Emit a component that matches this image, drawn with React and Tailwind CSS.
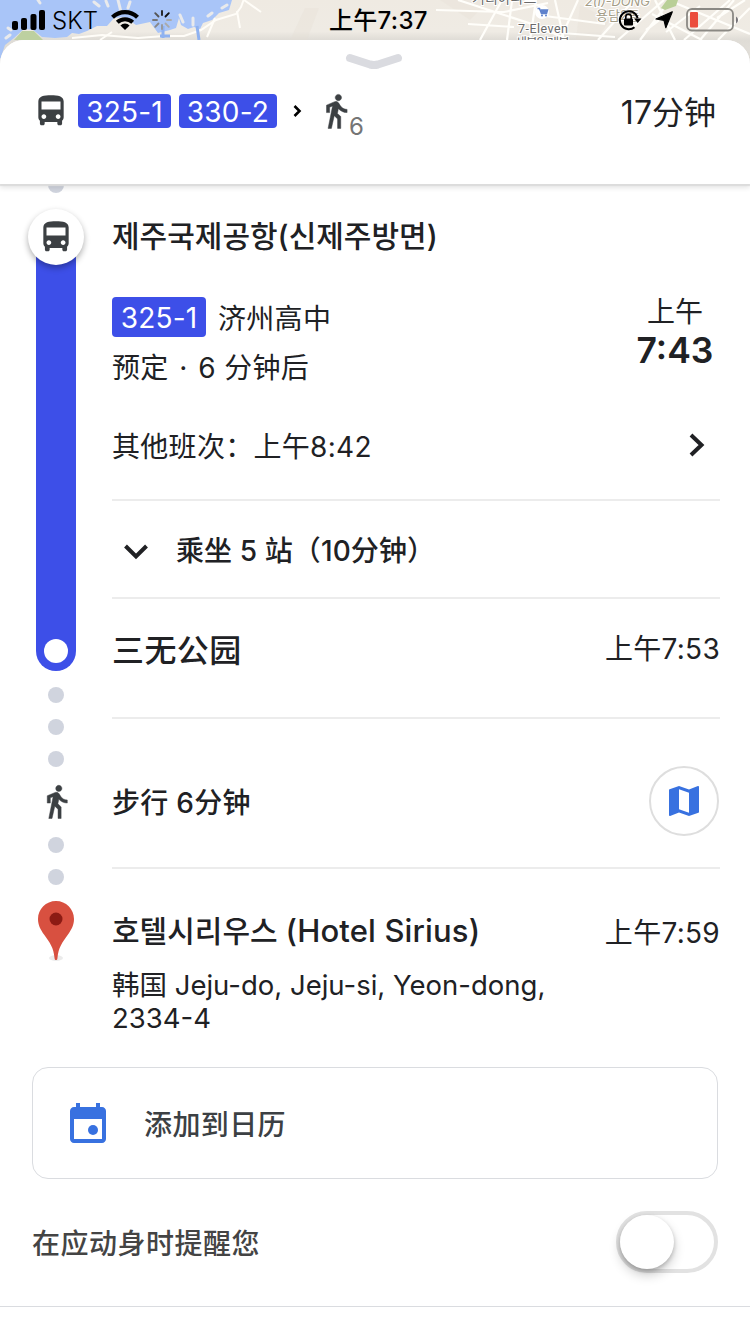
import React, { useState } from "react";
import { MdDirectionsBus, MdMap } from "react-icons/md";

const FONT = "font-['Inter','Noto_Sans_CJK_SC',sans-serif]";
const FONT_KR = "font-['Inter','Noto_Sans_CJK_KR',sans-serif]";

// Strip of map that stays visible behind the sheet
const MapBackdrop = () => (
  <svg className="absolute inset-x-0 top-0 -z-10" width="750" height="70" viewBox="0 0 750 70">
    <defs>
      <linearGradient id="land" x1="0" y1="0" x2="0" y2="1">
        <stop offset="0" stopColor="#efeae2" />
        <stop offset="0.45" stopColor="#efebe4" />
        <stop offset="0.57" stopColor="#dfdcd6" />
        <stop offset="1" stopColor="#e6e3de" />
      </linearGradient>
    </defs>
    <rect width="750" height="70" fill="url(#land)" />
    <path
      d="M0 0H232L229 10 219 13 212 20 203 23 200 29 194 27 188 29 181 25 179 18 176 28 170 30 158 33 150 22 136 25 125 17 114 18 107 26 97 26 87 31 79 34 72 33 67 37 55 38 42 37 33 30 24 29 14 38 5 45 0 46z"
      fill="#a9c5f8"
    />
    <path d="M14 40L22 31 34 31 43 40z" fill="#bdd0a0" />
    <path d="M0 60L5 45 0 45z" fill="#a9c5f8" />
    <g stroke="#e9eaec" strokeWidth="3" fill="none" strokeLinecap="round">
      <path d="M94 2l5 4M106 1l2 5M118 0l3 12M130 2l-2 6M6 38l4-3M38 0l2 3M8 28l3 2M180 15l3 7M193 18v7M208 16l4-3M222 8l5-3" />
    </g>
    <g stroke="#fffdf8" strokeWidth="2" fill="none">
      <path d="M72 38l30-3 36 3 26-2 20 0 17-6 15-10 20-6 5-7 3-8" />
      <path d="M237 11l3 17M207 37l8-19M244 0l17 12M100 40l12-8" />
    </g>
    <path d="M163 26v12M197 26l2 14M160 36h10" stroke="#8fb2f0" strokeWidth="3" />
    <g fill="#e5dfd4">
      <path d="M290 40l15-32 14 0-12 32zM440 0h50l-20 20zM580 5l30 15-14 20h-20z" opacity="0.3" />
    </g>
    <g stroke="#fffefa" strokeWidth="2.2" fill="none">
      <path d="M468 24l46 3M458 0l80 26 30 14M436 10l68 2 44-9M512 0l-5 40M480 40l22-40M536 0l-6 40M555 0l9 40M578 0l-18 40M545 16l60 8M535 31l80 6" />
      <path d="M598 40l36-40M618 40l46-40M640 40l30-40M652 14l50 26M668 0l82 34M684 40l46-40M700 40l34-40M718 40l32-32M745 0l-28 18M646 30l20-15M666 32l34-26M655 0l20 40" />
    </g>
    <path d="M661 8l6-8h11l-2 6-11 4z" fill="#b9cf97" />
    <circle cx="542" cy="12" r="7" fill="#fff" />
    <path d="M537.500 8.500h2l2 5h5l1-3.500h-6.500" stroke="#5f82cc" strokeWidth="1.500" fill="#5f82cc" />
    <circle cx="542" cy="15.500" r="1" fill="#5f82cc" />
    <circle cx="546" cy="15.500" r="1" fill="#5f82cc" />
    <g className={FONT_KR} fill="#6b6b6b" stroke="#fff" strokeWidth="2" paintOrder="stroke">
      <text x="472" y="3" fontSize="14">거리아파트</text>
      <text x="518" y="33" fontSize="12.500" className="font-['Roboto',sans-serif]" textLength="50">7-Eleven</text>
      <text x="515" y="47" fontSize="13" textLength="55">세븐일레븐</text>
      <text x="585" y="6" fontSize="13" fontStyle="italic" fill="#a39c86" textLength="65">2(I)-DONG</text>
      <text x="596" y="20" fontSize="13" fill="#a39c86">용담2동</text>
    </g>
  </svg>
);

const StatusBar = () => (
  <div className="flex h-10 items-center justify-between pr-[11px] pl-3 text-black">
    <div className="flex w-[317px] items-center">
      <svg width="33" height="20" viewBox="0 0 33 20">
        <rect y="11" width="6" height="9" rx="2" />
        <rect x="9" y="8" width="6" height="12" rx="2" />
        <rect x="18.500" y="4" width="6" height="16" rx="2" />
        <rect x="27" width="6" height="20" rx="2" />
      </svg>
      <span className="mt-0.5 ml-[7px] w-[59px] text-[24px] leading-[38px] font-light">SKT</span>
      <svg width="28" height="20" viewBox="0 0 28 20">
        <path d="M1.500 7.300a17.800 17.800 0 0 1 25 0" stroke="#000" strokeWidth="4.200" fill="none" />
        <path d="M6.300 12.300a11 11 0 0 1 15.400 0" stroke="#000" strokeWidth="4" fill="none" />
        <path d="M14 20l-4.600-4.500a6.500 6.500 0 0 1 9.200 0z" />
      </svg>
      <svg className="ml-[13px]" width="20" height="20" viewBox="-10 -10 20 20" strokeWidth="1.900" strokeLinecap="round">
        <path d="M0-5V-9" stroke="#222" />
        <path d="M3.500-3.500L6.800-6.800" stroke="#111" />
        <path d="M5 0H9" stroke="#aaa" />
        <path d="M3.500 3.500L6.800 6.800" stroke="#aaa" />
        <path d="M0 5V9" stroke="#999" />
        <path d="M-3.500 3.500L-6.800 6.800" stroke="#888" />
        <path d="M-5 0H-9" stroke="#777" />
        <path d="M-3.500-3.500L-6.800-6.800" stroke="#555" />
      </svg>
    </div>
    <span className="mt-0.5 flex-1 text-[24px] leading-[38px] font-medium tracking-[0.3px] whitespace-nowrap">
      上午7:37
    </span>
    <div className="flex items-center">
      <svg width="24" height="22" viewBox="0 0 24 22">
        <path d="M16.500 18.200A9 9 0 1 1 19.600 9" stroke="#000" strokeWidth="2" fill="none" />
        <path d="M16 9.500h7.500L19.700 14z" />
        <rect x="6" y="9.500" width="9" height="7" rx="1" />
        <path d="M7.800 10V7.800a2.700 2.700 0 0 1 5.400 0V10" stroke="#000" strokeWidth="1.600" fill="none" />
      </svg>
      <svg className="ml-[13px]" width="18" height="18" viewBox="0 0 18 18">
        <path d="M17.300.8L10.800 16.700 9 9.300 1 8z" stroke="#000" strokeWidth="1.200" strokeLinejoin="round" />
      </svg>
      <svg className="ml-[13px]" width="53" height="24" viewBox="0 0 53 24">
        <rect x="1" y="1" width="46" height="21.500" rx="5" stroke="#8b8984" strokeWidth="1.800" fill="none" />
        <rect x="4" y="4" width="8" height="15.500" rx="1" fill="#eb4d3d" />
        <path d="M50 8.500a4 4 0 0 1 0 7z" fill="#77757a" />
      </svg>
    </div>
  </div>
);

const WalkIcon = ({ className }) => (
  <svg className={className} viewBox="0 0 24 24" fill="#3c4043" stroke="#3c4043" strokeWidth="0.3">
    <path d="M13.500 5.500c1.100 0 2-.9 2-2s-.9-2-2-2-2 .9-2 2 .9 2 2 2zM9.800 8.900L7 23h2.100l1.800-8 2.100 2v6h2v-7.500l-2.100-2 .6-3C14.800 12 16.800 13 19 13v-2c-1.900 0-3.500-1-4.300-2.400l-1-1.600c-.4-.6-1-1-1.700-1-.3 0-.5.1-.8.1L6 8.300V13h2V9.600l1.800-.7" />
  </svg>
);

const LineBadge = ({ children, className }) => (
  <span
    className={`flex items-center justify-center rounded bg-[#3d4fe8] pt-px text-[28px] leading-none tracking-[0.2px] text-white ${className}`}
  >
    {children}
  </span>
);

const Dot = ({ className = "mt-4" }) => (
  <div className={`size-4 shrink-0 rounded-full bg-[#d0d4de] ${className}`}></div>
);

const Timeline = () => (
  <div className="flex w-28 shrink-0 flex-col items-center">
    <Dot className="-mt-[7px]" />
    <div className="z-10 mt-4 flex size-14 shrink-0 items-center justify-center rounded-full bg-white shadow-[0_3px_6px_rgba(0,0,0,0.32)]">
      <MdDirectionsBus className="size-[38px] text-[#3c4043]" />
    </div>
    <div className="-mt-7 flex h-[434px] w-10 shrink-0 flex-col items-center justify-end rounded-b-full bg-[#3d4fe8] pb-2">
      <div className="size-6 rounded-full bg-white"></div>
    </div>
    <Dot />
    <Dot />
    <Dot />
    <WalkIcon className="mt-4 size-[37px] shrink-0" />
    <Dot className="mt-[17px]" />
    <Dot />
    <svg className="mt-4 shrink-0" width="36" height="60" viewBox="0 0 36 60">
      <ellipse cx="18" cy="57" rx="7" ry="3" fill="#000" opacity="0.08" />
      <path
        d="M18 0C8 0 0 8 0 18c0 6 2.500 10.500 6 15.500C12 42 15.500 46 16.600 57.500c.2 2 2.600 2 2.800 0C20.500 46 24 42 30 33.500 33.500 28.500 36 24 36 18 36 8 28 0 18 0z"
        fill="#d85040"
      />
      <circle cx="18" cy="18" r="6.500" fill="#8c1b14" />
    </svg>
  </div>
);

const App = () => {
  const [remind, setRemind] = useState(false);

  return (
    <div className={`relative isolate h-[1334px] w-[750px] overflow-hidden text-[#202124] ${FONT}`}>
      <MapBackdrop />
      <StatusBar />

      <div className="h-[1294px] rounded-t-[24px] bg-white">
        {/* Route summary */}
        <header className="relative z-20 flex h-36 flex-col items-center rounded-t-[24px] bg-white shadow-[0_2px_1px_#dcdcdc,0_4px_5px_rgba(0,0,0,0.1)]">
          <svg className="mt-3 mr-0.5" width="58" height="20" viewBox="0 0 58 20">
            <path d="M5 6L25 12.500q4 1 8 0L53 6" stroke="#dadbe0" strokeWidth="8" strokeLinecap="round" fill="none" />
          </svg>
          <div className="mt-[14px] flex h-[50px] w-full items-center pr-[34px] pl-8">
            <MdDirectionsBus className="size-[38px] text-[#3c4043]" />
            <LineBadge className="ml-2 h-[34px] w-[93px]">325-1</LineBadge>
            <LineBadge className="ml-2 h-[34px] w-[98px]">330-2</LineBadge>
            <svg className="ml-4" width="9" height="12" viewBox="0 0 9 12">
              <path d="M1.500 1L6.500 6 1.500 11" stroke="#000" strokeWidth="2.600" fill="none" />
            </svg>
            <WalkIcon className="ml-[15px] size-[38px]" />
            <span className="-ml-[6px] pt-8 text-[24px] leading-none text-[#757575]">6</span>
            <span className="ml-auto pt-[3px] text-[32px] leading-none">17分钟</span>
          </div>
        </header>

        {/* Trip details */}
        <div className="flex h-[883px]">
          <Timeline />
          <div className="flex-1 pr-[30px]">
            <section className="h-[317px] border-b-2 border-[#ececec] pt-8">
              <h2 className={`h-10 text-[30px] leading-10 font-medium whitespace-nowrap ${FONT_KR}`}>
                제주국제공항(신제주방면)
              </h2>
              <div className="mt-[38px] flex justify-between">
                <div>
                  <div className="mt-[3px] flex items-center">
                    <LineBadge className="h-10 w-[94px]">325-1</LineBadge>
                    <span className="ml-3 pt-1 text-[28px] leading-9 tracking-[0.3px]">济州高中</span>
                  </div>
                  <p className="mt-[11px] text-[28px] leading-10 tracking-[0.3px]">
                    预定<span className="mx-[2.5px]"> · </span>6 分钟后
                  </p>
                </div>
                <div className="w-[90px] text-center">
                  <p className="text-[28px] leading-9">上午</p>
                  <p className="pt-px text-[35.5px] leading-10 font-semibold">7:43</p>
                </div>
              </div>
              <div className="mt-[37px] flex items-center justify-between pr-[15px]">
                <p className="pt-0.5 text-[28px] leading-10 tracking-[0.3px]">其他班次：上午8:42</p>
                <svg className="mb-0.5" width="16" height="24" viewBox="0 0 16 24">
                  <path d="M2 2L12.500 12 2 22" stroke="#202124" strokeWidth="4" fill="none" />
                </svg>
              </div>
            </section>

            <section className="flex h-[98px] items-center border-b-2 border-[#ececec] pt-1 pl-3">
              <svg className="mt-0.5" width="24" height="16" viewBox="0 0 24 16">
                <path d="M1.500 2L12 12.500 22.500 2" stroke="#202124" strokeWidth="4" fill="none" />
              </svg>
              <span className="ml-7 text-[28px] leading-10 font-medium tracking-[0.1px]">乘坐 5 站（10分钟）</span>
            </section>

            <section className="flex h-[120px] justify-between border-b-2 border-[#ececec] pt-[30px]">
              <h2 className="text-[32px] leading-[44px] font-medium tracking-[0.4px]">三无公园</h2>
              <span className="text-[28px] leading-10 tracking-[0.3px]">上午7:53</span>
            </section>

            <section className="flex h-[150px] items-center justify-between border-b-2 border-[#ececec] pt-4">
              <span className="pt-[3px] text-[28px] leading-10 font-medium tracking-[0.3px]">步行 6分钟</span>
              <button className="mr-px flex size-[70px] items-center justify-center rounded-full border-2 border-[#dedede]">
                <MdMap className="size-10 text-[#3871e0]" />
              </button>
            </section>

            <section className="pt-[42px]">
              <div className="flex justify-between">
                <h2 className={`text-[30px] leading-10 font-medium whitespace-nowrap ${FONT_KR}`}>
                  호텔시리우스 <span className="text-[31px] tracking-[0.15px]">(Hotel Sirius)</span>
                </h2>
                <span className="text-[28px] leading-[44px] tracking-[0.3px]">上午7:59</span>
              </div>
              <p className="mt-[14px] w-[460px] text-[27.5px] leading-[33px]">
                韩国 Jeju-do, Jeju-si, Yeon-dong, 2334-4
              </p>
            </section>
          </div>
        </div>

        <button className="mx-8 flex h-28 w-[686px] items-center rounded-2xl border border-[#dadce0] pl-[31px]">
          <svg width="48" height="48" viewBox="0 0 24 24" fill="#3871e0">
            <path d="M19 4h-1V2h-2v2H8V2H6v2H5c-1.100 0-2 .9-2 2v14c0 1.100.9 2 2 2h14c1.100 0 2-.9 2-2V6c0-1.100-.9-2-2-2zm0 16H5V10h14v10z" />
            <circle cx="14.500" cy="15.500" r="2.500" />
          </svg>
          <span className="ml-8 pt-1 text-[28px] leading-10 font-medium tracking-[0.4px] text-[#3c4043]">添加到日历</span>
        </button>

        <div className="flex h-32 items-center justify-between border-b border-[#dadce0] px-8">
          <span className="pt-0.5 text-[28px] leading-10 font-medium tracking-[0.5px] text-[#444]">
            在应动身时提醒您
          </span>
          <button
            role="switch"
            aria-checked={remind}
            onClick={() => setRemind(!remind)}
            className={`mb-0.5 flex h-[62px] w-[102px] items-start rounded-full border-4 ${
              remind ? "justify-end border-[#34a853] bg-[#34a853]" : "justify-start border-[#e2e2e2] bg-white"
            }`}
          >
            <span className="size-[54px] rounded-full bg-white shadow-[0_6px_12px_rgba(0,0,0,0.2),0_2px_4px_rgba(0,0,0,0.2)]"></span>
          </button>
        </div>
      </div>
    </div>
  );
};

export default App;
